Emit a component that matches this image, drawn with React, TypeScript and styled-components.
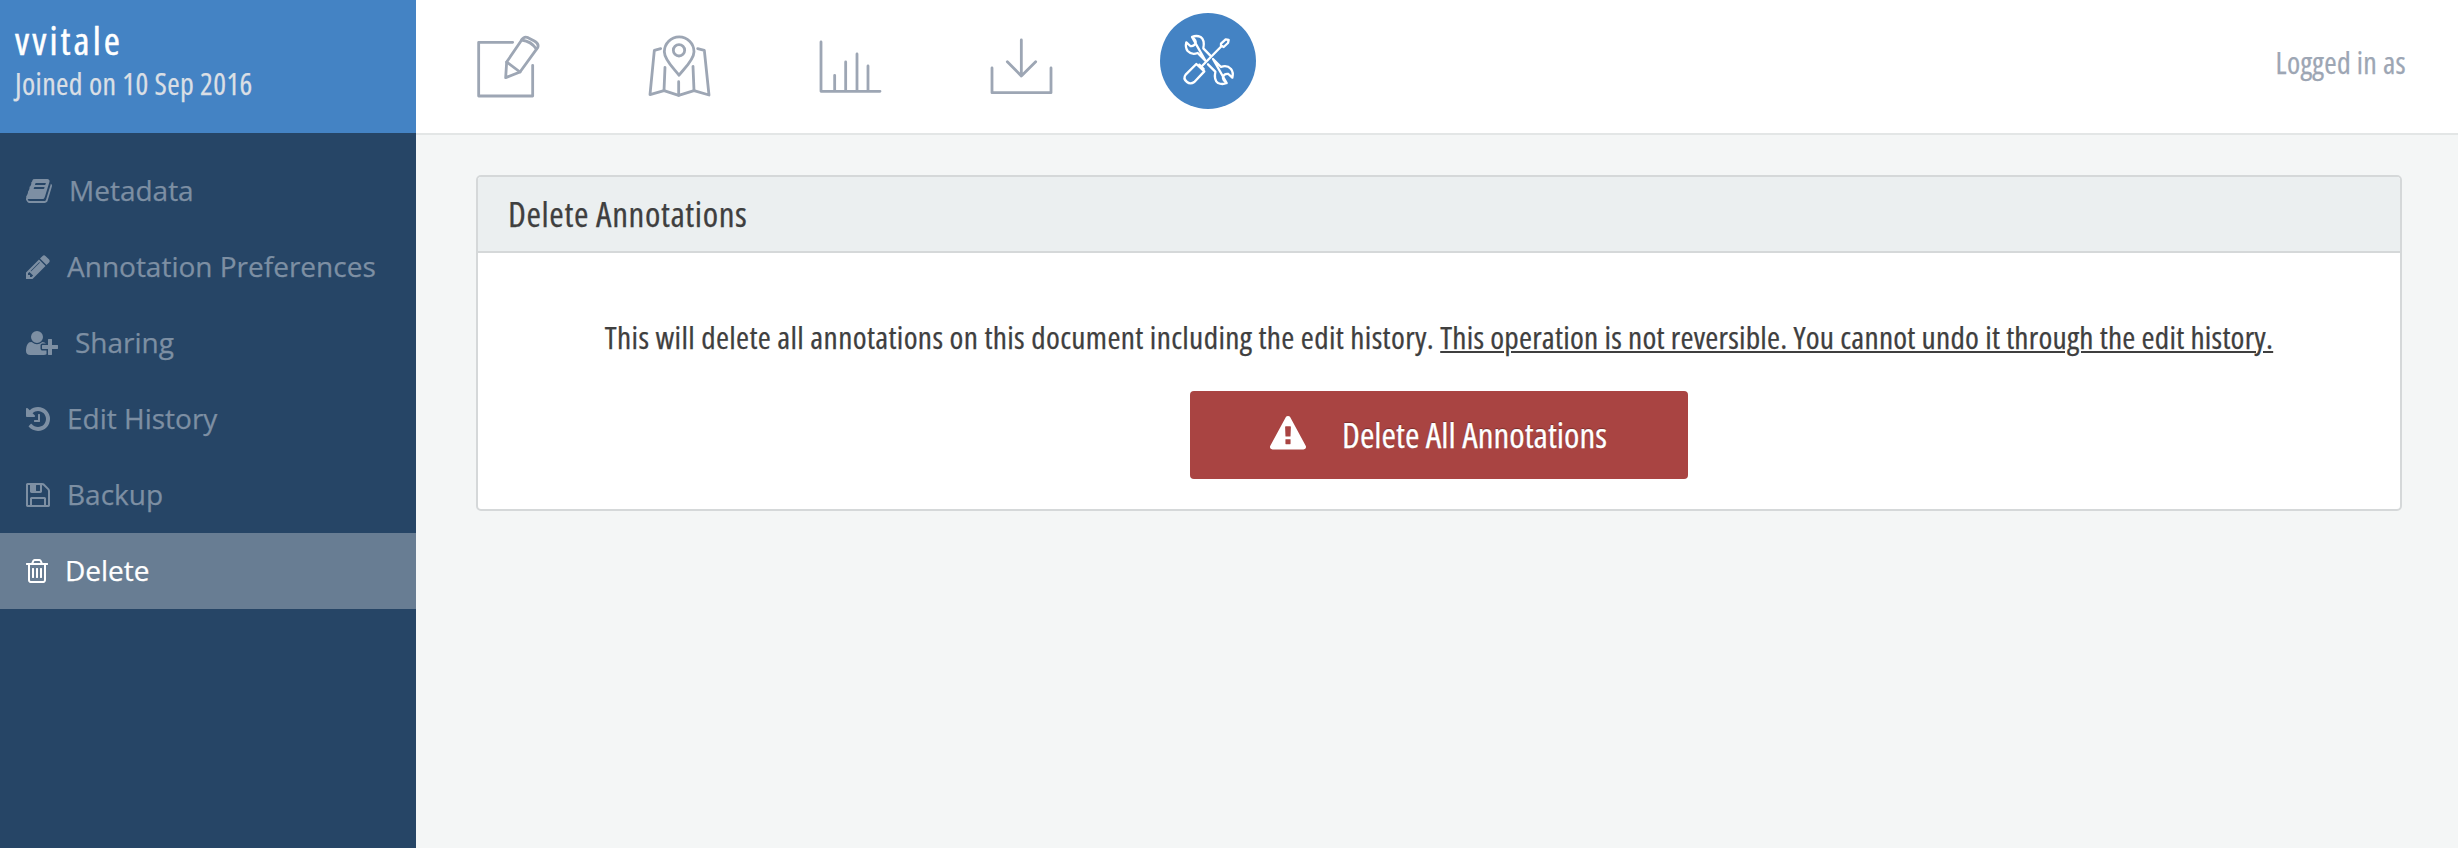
import React from "react";
import styled, { createGlobalStyle } from "styled-components";

const GlobalStyle = createGlobalStyle`
  * { box-sizing: border-box; }
  body {
    margin: 0;
    background: #f4f6f6;
    font-family: "Open Sans", "Noto Sans", sans-serif;
    color: #3f3f3f;
    -webkit-text-stroke: 0.25px currentColor;
  }
`;

const Page = styled.div`
  display: flex;
  height: 848px;
  overflow: hidden;
`;

const Sidebar = styled.aside`
  width: 416px;
  flex: none;
  background: #264566;
`;

const Owner = styled.header`
  height: 133px;
  padding: 18px 0 0 15px;
  background: #4483c4;
  white-space: nowrap;
`;

const OwnerName = styled.h1`
  margin: 0;
  font-size: 39px;
  line-height: 44px;
  font-weight: 400;
  font-stretch: 75%;
  letter-spacing: 3.1px;
  color: #fff;
  -webkit-text-stroke-width: 0.5px;
`;

const OwnerJoined = styled.p`
  margin: 0;
  font-size: 30px;
  line-height: 44px;
  font-stretch: 75%;
  letter-spacing: 0.38px;
  color: #dadfe5;
`;

const Menu = styled.nav`
  display: flex;
  flex-direction: column;
  padding-top: 20px;
`;

const MenuItem = styled.a<{ $active?: boolean }>`
  display: flex;
  align-items: center;
  gap: 17.5px;
  height: 76px;
  padding-left: 25.5px;
  font-size: 28px;
  color: ${(p) => (p.$active ? "#fff" : "#7d8fa3")};
  background: ${(p) => (p.$active ? "#687d93" : "transparent")};
`;

const MenuLabel = styled.span`
  padding-bottom: 2px;
  white-space: nowrap;
`;

const GlyphSvg = styled.svg`
  display: block;
  flex: none;
  fill: currentColor;
`;

const Main = styled.main`
  flex: 1;
  min-width: 0;
`;

const TopBar = styled.header`
  display: flex;
  justify-content: space-between;
  height: 135px;
  padding: 0 52px 0 58px;
  background: #fff;
  border-bottom: 2px solid #e3e6e6;
`;

const Tabs = styled.nav`
  display: flex;
  gap: 104px;
  padding-top: 34px;
`;

const TabIcon = styled.svg`
  display: block;
  width: 68px;
  height: 68px;
  overflow: visible;
  fill: none;
  stroke: #9da6b4;
  stroke-width: 8.4;
  stroke-linecap: round;
  stroke-linejoin: round;
`;

const ActiveTab = styled.div`
  width: 96px;
  height: 96px;
  margin: -21px 0 0 -2px;
  border-radius: 50%;
  background: #4483c4;
`;

const ToolsSvg = styled.svg`
  display: block;
  width: 96px;
  height: 96px;
  fill: none;
  stroke: #fff;
  stroke-width: 7;
  stroke-linecap: round;
  stroke-linejoin: round;
`;

const Login = styled.span`
  height: 124px;
  line-height: 125px;
  font-size: 30px;
  font-stretch: 75%;
  letter-spacing: 0.3px;
  color: #9da6b4;
`;

const Card = styled.section`
  width: 1926px;
  height: 336px;
  margin: 40px 0 0 60px;
  border: 2px solid #d5d8d9;
  border-radius: 5px;
  background: #fff;
  overflow: hidden;
`;

const CardTitle = styled.h2`
  height: 76px;
  margin: 0;
  padding-left: 30px;
  border-bottom: 2px solid #d5d8d9;
  background: #ebeff0;
  font-size: 35px;
  line-height: 73px;
  font-weight: 400;
  font-stretch: 75%;
  letter-spacing: 0.6px;
`;

const CardBody = styled.div`
  display: flex;
  flex-direction: column;
  align-items: center;
  padding-top: 64px;
`;

const Warning = styled.p`
  margin: 0 0 34px;
  font-size: 31.5px;
  line-height: 40px;
  font-stretch: 75%;
  letter-spacing: 0.335px;
  white-space: nowrap;
`;

const Emphasis = styled.u`
  letter-spacing: 0.21px;
  text-decoration-thickness: 2px;
  text-underline-offset: 2px;
`;

const DeleteButton = styled.button`
  display: flex;
  align-items: center;
  gap: 36px;
  width: 498px;
  height: 88px;
  padding: 0 0 2px 80px;
  border: 0;
  border-radius: 4px;
  background: #a94442;
  color: #fff;
  font: 400 35px "Open Sans", sans-serif;
  font-stretch: 75%;
  text-shadow: 0 -1px 1px rgba(0, 0, 0, 0.3);
  white-space: nowrap;
`;

type GlyphShape = { x: number; w: number; d: string };

const glyphs: Record<string, GlyphShape> = {
  book: {
    x: 64,
    w: 1664,
    d: "M1703 478q40 57 18 129l-275 906q-19 64-76.5 107.5t-122.500 43.500h-923q-77 0-148.500-53.500t-99.500-131.500q-24-67-2-127 0-4 3-27t4-37q1-8-3-21.500t-3-19.500q2-11 8-21t16.500-23.500 16.500-23.500q23-38 45-91.500t30-91.500q3-10 .5-30t-.5-28q3-11 17-28t17-23q21-36 42-92t25-90q1-9-2.500-32t.5-28q4-13 22-30.500t22-22.500q19-26 42.500-84.500t27.500-96.500q1-8-3-25.500t-2-26.500q2-8 9-18t18-23 17-21q8-12 16.500-30.500t15-35 16-36 19.500-32 26.500-23.500 36-11.500 47.500 5.500l-1 3q38-9 51-9h761q74 0 114 56t18 130l-274 906q-36 119-71.500 153.500t-128.500 34.500h-869q-27 0-38 15-11 16-1 43 24 70 144 70h923q29 0 56-15.500t35-41.500l300-987q7-22 5-57 38 15 59 43zm-1064 2q-4 13 2 22.500t20 9.500h608q13 0 25.500-9.500t16.500-22.500l21-64q4-13-2-22.500t-20-9.500h-608q-13 0-25.500 9.500t-16.500 22.500zm-83 256q-4 13 2 22.500t20 9.500h608q13 0 25.500-9.500t16.500-22.500l21-64q4-13-2-22.500t-20-9.500h-608q-13 0-25.500 9.500t-16.500 22.500z",
  },
  pencil: {
    x: 128,
    w: 1536,
    d: "M491 1536l91-91-235-235-91 91v107h128v128h107zm523-928q0-22-22-22-10 0-17 7l-542 542q-7 7-7 17 0 22 22 22 10 0 17-7l542-542q7-7 7-17zm-54-192l416 416-832 832h-416v-416zm683 96q0 53-37 90l-166 166-416-416 166-165q36-38 90-38 53 0 91 38l235 234q37 39 37 91z",
  },
  userPlus: {
    x: 0,
    w: 2048,
    d: "M704 896q-159 0-271.500-112.500t-112.500-271.500 112.500-271.500 271.500-112.500 271.500 112.500 112.500 271.500-112.500 271.500-271.500 112.500zm960 128h352q13 0 22.500 9.500t9.500 22.500v192q0 13-9.500 22.500t-22.500 9.500h-352v352q0 13-9.500 22.500t-22.500 9.500h-192q-13 0-22.500-9.500t-9.500-22.500v-352h-352q-13 0-22.500-9.500t-9.500-22.500v-192q0-13 9.500-22.500t22.500-9.500h352v-352q0-13 9.500-22.500t22.500-9.500h192q13 0 22.500 9.500t9.500 22.500v352zm-736 224q0 52 38 90t90 38h256v238q-68 50-171 50h-874q-121 0-194-69t-73-190q0-53 3.500-103.500t14-109 26.500-108.500 43-97.500 62-81 85.500-53.500 111.500-20q19 0 39 17 79 61 154.500 91.500t164.500 30.500 164.500-30.500 154.500-91.500q20-17 39-17 132 0 217 96h-223q-52 0-90 38t-38 90v192z",
  },
  history: {
    x: 128,
    w: 1536,
    d: "M1664 896q0 156-61 298t-164 245-245 164-298 61q-172 0-327-72.500t-264-204.500q-7-10-6.500-22.500t8.500-20.500l137-138q10-9 25-9 16 2 23 12 73 95 179 147t225 52q104 0 198.500-40.500t163.500-109.500 109.500-163.500 40.500-198.500-40.500-198.500-109.500-163.500-163.500-109.500-198.500-40.500q-98 0-188 35.500t-160 101.500l137 138q31 30 14 69-17 40-59 40h-448q-26 0-45-19t-19-45v-448q0-42 40-59 39-17 69 14l130 129q107-101 244.500-156.500t284.500-55.500q156 0 298 61t245 164 164 245 61 298zm-640-288v448q0 14-9 23t-23 9h-320q-14 0-23-9t-9-23v-64q0-14 9-23t23-9h224v-352q0-14 9-23t23-9h64q14 0 23 9t9 23z",
  },
  floppy: {
    x: 128,
    w: 1536,
    d: "M512 1536h768v-384h-768v384zm896 0h128v-896q0-14-10-38.500t-20-34.500l-281-281q-10-10-34-20t-39-10v416q0 40-28 68t-68 28h-576q-40 0-68-28t-28-68v-416h-128v1280h128v-416q0-40 28-68t68-28h832q40 0 68 28t28 68v416zm-384-928v-320q0-13-9.500-22.500t-22.500-9.500h-192q-13 0-22.500 9.500t-9.500 22.500v320q0 13 9.500 22.500t22.500 9.500h192q13 0 22.500-9.500t9.500-22.500zm640 32v928q0 40-28 68t-68 28h-1344q-40 0-68-28t-28-68v-1344q0-40 28-68t68-28h928q40 0 88 20t76 48l280 280q28 28 48 76t20 88z",
  },
  trash: {
    x: 192,
    w: 1408,
    d: "M704 736v576q0 14-9 23t-23 9h-64q-14 0-23-9t-9-23v-576q0-14 9-23t23-9h64q14 0 23 9t9 23zm256 0v576q0 14-9 23t-23 9h-64q-14 0-23-9t-9-23v-576q0-14 9-23t23-9h64q14 0 23 9t9 23zm256 0v576q0 14-9 23t-23 9h-64q-14 0-23-9t-9-23v-576q0-14 9-23t23-9h64q14 0 23 9t9 23zm128 724v-948h-896v948q0 22 7 40.500t14.500 27 10.500 8.500h832q3 0 10.500-8.500t14.500-27 7-40.500zm-672-1076h448l-48-117q-7-9-17-11h-317q-10 2-17 11zm928 32v64q0 14-9 23t-23 9h-96v948q0 83-47 143.500t-113 60.500h-832q-66 0-113-58.500t-47-141.500v-952h-96q-14 0-23-9t-9-23v-64q0-14 9-23t23-9h309l70-167q15-37 54-63t79-26h320q40 0 79 26t54 63l70 167h309q14 0 23 9t9 23z",
  },
  warning: {
    x: 0,
    w: 1792,
    d: "M1024 1375v-190q0-14-9.500-23.500t-22.500-9.500h-192q-13 0-22.500 9.500t-9.500 23.500v190q0 14 9.500 23.500t22.500 9.500h192q13 0 22.500-9.500t9.500-23.500zm-2-374l18-459q0-12-10-19-13-11-24-11h-220q-11 0-24 11-10 7-10 21l17 457q0 10 10 16.500t24 6.500h185q14 0 23.500-6.500t10.500-16.500zm-14-934l768 1408q35 63-2 126-17 29-46.500 46t-63.500 17h-1536q-34 0-63.500-17t-46.500-46q-37-63-2-126l768-1408q17-31 47-49t65-18 65 18 47 49z",
  },
};

function Glyph({ name, em }: { name: string; em: number }) {
  const g = glyphs[name];
  return (
    <GlyphSvg viewBox={`${g.x} 0 ${g.w} 1792`} width={(g.w / 1792) * em} height={em}>
      <path d={g.d} />
    </GlyphSvg>
  );
}

const menu = [
  { icon: "book", label: "Metadata" },
  { icon: "pencil", label: "Annotation Preferences" },
  { icon: "userPlus", label: "Sharing" },
  { icon: "history", label: "Edit History" },
  { icon: "floppy", label: "Backup" },
  { icon: "trash", label: "Delete", active: true },
];

const EditIcon = () => (
  <TabIcon viewBox="42 42 204 204">
    <path d="M158 67H56V228H218V136" />
    <path d="M137 173L140 126L185 60Q192 48 204 53L223 63Q238 71 233 83L180 156Z" />
    <path d="M140 126L180 156M185 60Q214 64 229 87" />
  </TabIcon>
);

const MapIcon = () => (
  <TabIcon viewBox="558 42 204 204">
    <path d="M657 166C647 151 613 121 613 95A44 44 0 0 1 702 95C702 121 667 151 657 166Z" />
    <circle cx="657" cy="91" r="17" />
    <path d="M602 86L583 91L570 224L612 212L656 226L702 212L747 225L733 91L713 86" />
    <path d="M615 142L612 212M656 185V226M699 139L702 212" />
  </TabIcon>
);

const ChartIcon = () => (
  <TabIcon viewBox="54 42 204 204">
    <path d="M63 66V214H240" />
    <path d="M104 166V212M137 126V212M171 102V212M204 138V212" />
  </TabIcon>
);

const DownloadIcon = () => (
  <TabIcon viewBox="570 42 204 204">
    <path d="M576 144V218H753V144" />
    <path d="M664 60V167M622 125L664 168L707 125" />
  </TabIcon>
);

const ToolsIcon = () => (
  <ToolsSvg viewBox="60 39 288 288">
    <path d="M156 111Q169 105 182 111Q195 120 190 145L211 167M196 182L173 159Q155 166 143 153Q135 143 139 127L151 138Q162 140 167 130Q169 121 156 111Z" />
    <path d="M260 249Q247 255 234 249Q221 240 226 215L204 193M219 177L243 201Q261 194 273 207Q281 217 277 233L265 222Q254 220 249 230Q247 239 260 249Z" />
    <path d="M186 198L245 138" />
    <path d="M243 137L243 131L257 118L266 120L264 129L251 141Z" />
    <path d="M169 192L193 214L163 246Q151 254 141 246Q128 236 137 224Z" />
    <path d="M178 194L191 207" />
  </ToolsSvg>
);

export default function App() {
  return (
    <Page>
      <GlobalStyle />
      <Sidebar>
        <Owner>
          <OwnerName>vvitale</OwnerName>
          <OwnerJoined>Joined on 10 Sep 2016</OwnerJoined>
        </Owner>
        <Menu>
          {menu.map((m) => (
            <MenuItem key={m.label} $active={m.active}>
              <Glyph name={m.icon} em={28} />
              <MenuLabel>{m.label}</MenuLabel>
            </MenuItem>
          ))}
        </Menu>
      </Sidebar>
      <Main>
        <TopBar>
          <Tabs>
            <EditIcon />
            <MapIcon />
            <ChartIcon />
            <DownloadIcon />
            <ActiveTab>
              <ToolsIcon />
            </ActiveTab>
          </Tabs>
          <Login>Logged in as</Login>
        </TopBar>
        <Card>
          <CardTitle>Delete Annotations</CardTitle>
          <CardBody>
            <Warning>
              This will delete all annotations on this document including the edit history.{" "}
              <Emphasis>
                This operation is not reversible. You cannot undo it through the edit history.
              </Emphasis>
            </Warning>
            <DeleteButton>
              <Glyph name="warning" em={36} />
              Delete All Annotations
            </DeleteButton>
          </CardBody>
        </Card>
      </Main>
    </Page>
  );
}
